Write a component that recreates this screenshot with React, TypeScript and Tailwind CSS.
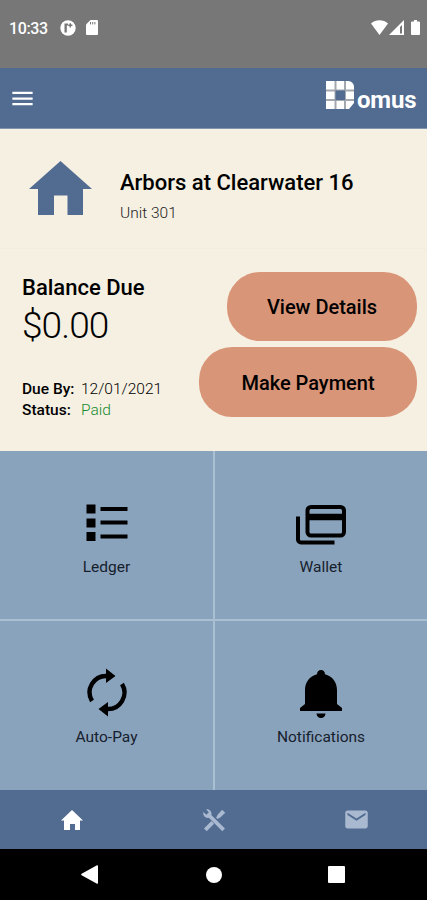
import type { ReactNode } from "react";
import { MdMail, MdMenu } from "react-icons/md";

function StatusBar() {
    return (
        <div className="flex h-[68px] items-start justify-between bg-[#777777] pt-[18px] pr-[7px] pl-[9px] text-white">
            <div className="flex h-[19px] items-center">
                <span className="mt-[2px] w-[39px] text-[16px] font-medium tracking-[-0.4px] whitespace-nowrap">10:33</span>
                <svg className="ml-3 h-4 w-4" viewBox="0 0 16 16">
                    <circle cx="8" cy="8" r="7.7" fill="currentColor" />
                    <path d="M4.500 3.500h3.500V5.500H6.800V12.500H4.500z" fill="#777777" />
                    <path d="M10.300 3.200v4.200M8.200 5.300h4.200" stroke="#777777" strokeWidth="1.5" />
                </svg>
                <svg className="ml-[10px] h-[15px] w-3" viewBox="0 0 12 15">
                    <path d="M4.500 0H11a1 1 0 0 1 1 1v13a1 1 0 0 1-1 1H1a1 1 0 0 1-1-1V4.500z" fill="currentColor" />
                    <path d="M4.500 2v2.400M6.700 2v2.400M8.900 2v2.400" stroke="#777777" strokeWidth="1" />
                </svg>
            </div>
            <div className="flex h-[19px] items-center">
                <svg className="h-[15px] w-[17px]" viewBox="0 0 17 15">
                    <path d="M0 3.400C4.800-.900 12.200-.900 17 3.400L8.500 15z" fill="currentColor" />
                </svg>
                <svg className="ml-[1px] h-[15px] w-[15px]" viewBox="0 0 15 15">
                    <path d="M0 15 15 0v15z" fill="currentColor" />
                    <path d="M11 7v6.500h2V5z" fill="#777777" />
                </svg>
                <svg className="ml-[7px] h-[15px] w-[9px]" viewBox="0 0 9 15">
                    <path d="M3 0h3v1.500h2a1 1 0 0 1 1 1V14a1 1 0 0 1-1 1H1a1 1 0 0 1-1-1V2.500a1 1 0 0 1 1-1h2z" fill="currentColor" />
                </svg>
            </div>
        </div>
    );
}

function Logo() {
    return (
        <div className="flex items-start text-white">
            <svg className="h-7 w-7" viewBox="0 0 28 28" fill="currentColor">
                <clipPath id="logo-shape">
                    <path d="M0 0h22a6 6 0 0 1 6 6v15l-6 7H0z" />
                </clipPath>
                <path d="M0 0h28v28H0z" fill="#a3a7ae" clipPath="url(#logo-shape)" />
                <path d="M0 0h8.500v8.500H0zM10.500 0h7.500v8.500h-7.500zM20 0h2a6 6 0 0 1 6 6v2.500h-8zM0 10.500h8.500v7.500H0zM20 10.500h8v7.500h-8zM0 20h8.500v8H0zM10.500 20h7.500v8h-7.500zM20 20h8v2l-5 6h-3z" />
                <path d="M9.500 9.500H19V19H9.500z" fill="#516b91" />
            </svg>
            <span className="mt-[5px] ml-[3px] w-[60px] text-[24px] leading-[28px] font-bold tracking-[-0.2px]">omus</span>
        </div>
    );
}

function Header() {
    return (
        <header className="flex h-[61px] items-start justify-between border-b border-[#8195af] bg-[#516b91] pt-[13px] pr-[10px] pl-[9px]">
            <MdMenu className="mt-1 h-[27px] w-[27px] text-white" />
            <Logo />
        </header>
    );
}

function Property() {
    return (
        <section className="flex h-[120px] items-start border-b border-[#f3ecdf] pt-8 pl-[29px]">
            <svg className="h-[54px] w-[63px] text-[#516b91]" viewBox="0 0 63 54" fill="currentColor">
                <path d="M31.500 0 63 28h-9v26H38.500V34.500H25V54H9V28H0z" />
            </svg>
            <div className="mt-[9px] ml-[28px]">
                <h1 className="text-[22px] leading-[26px] font-medium whitespace-nowrap text-black">
                    Arbors at Clearwater 16
                </h1>
                <p className="mt-[7px] text-[15.5px] leading-5 font-light text-[#222222]">Unit 301</p>
            </div>
        </section>
    );
}

function Balance() {
    return (
        <section className="flex h-[202px] justify-between pr-[10px] pl-[22px]">
            <div className="pt-[26px] whitespace-nowrap text-black">
                <h2 className="text-[22px] leading-[26px] font-medium">Balance Due</h2>
                <p className="mt-[4px] text-[37px] leading-[42px] font-light tracking-[-0.9px]">$0.00</p>
                <div className="mt-[32px] text-[15.5px] leading-[21px]">
                    <p className="flex">
                        <span className="w-[59px] font-medium">Due By:</span>
                        <span className="font-light">12/01/2021</span>
                    </p>
                    <p className="flex">
                        <span className="w-[59px] font-medium">Status:</span>
                        <span className="font-light text-[#178a2e]">Paid</span>
                    </p>
                </div>
            </div>
            <div className="flex flex-col items-end gap-[6px] pt-[23px]">
                <button className="h-[69px] w-[190px] rounded-[33px] bg-[#d99578] pt-[1px] text-[20px] font-medium text-black">
                    View Details
                </button>
                <button className="h-[70px] w-[218px] rounded-[33px] bg-[#d99578] pt-[2px] text-[20px] font-medium text-black">
                    Make Payment
                </button>
            </div>
        </section>
    );
}

function LedgerIcon() {
    return (
        <svg className="h-[54px] w-[54px]" viewBox="0 0 54 54">
            <path d="M6.500 8.500h9v9h-9zM6.500 22.500h9v9h-9zM6.500 36h9v9h-9z" fill="currentColor" />
            <path d="M20.500 13h27M20.500 26.500h27M20.500 40.500h27" stroke="currentColor" strokeWidth="4" />
        </svg>
    );
}

function WalletIcon() {
    return (
        <svg className="h-[54px] w-[54px]" viewBox="0 0 54 54" fill="none" stroke="currentColor" strokeWidth="4">
            <rect x="13.500" y="11" width="36.500" height="28.500" rx="3.500" />
            <path d="M13 21h37" strokeWidth="6.500" />
            <path d="M4 20.500V43.500a3 3 0 0 0 3 3H40.500" />
        </svg>
    );
}

function AutoPayIcon() {
    return (
        <svg className="h-[54px] w-[54px]" viewBox="0 0 54 54">
            <path d="M12 35A16.500 16.500 0 0 1 27 10M42 18A16.500 16.500 0 0 1 27 43" fill="none" stroke="currentColor" strokeWidth="4.400" />
            <path d="M26 2.500 35.500 10 26 17zM28 50.500 18.500 43 28 36z" fill="currentColor" />
        </svg>
    );
}

function BellIcon() {
    return (
        <svg className="h-[54px] w-[54px]" viewBox="0 0 54 54" fill="currentColor">
            <path d="M27 4a4 4 0 0 1 4 4.300C38.500 10.300 43 16.500 43 24v14l5 4v3H6v-3l5-4V24c0-7.500 4.500-13.700 12-15.700A4 4 0 0 1 27 4zM22.500 47.500h9a4.500 4.500 0 0 1-9 0z" />
        </svg>
    );
}

function Tile({ icon, label }: { icon: ReactNode; label: string }) {
    return (
        <button className="flex flex-col items-center bg-[#8aa3bd] pt-[45px] text-black">
            {icon}
            <span className="mt-[7px] text-[15.5px] leading-5 text-[#16202c]">{label}</span>
        </button>
    );
}

function BottomNav() {
    return (
        <nav className="grid h-[59px] grid-cols-3 place-items-center bg-[#516b91] pl-px text-[#a9b9d0]">
            <svg className="mt-px h-5 w-[22px] text-white" viewBox="0 0 22 20" fill="currentColor">
                <path d="M11 0 22 10.500h-3V20h-5v-6H9v6H3v-9.500H0z" />
            </svg>
            <svg className="mt-px h-[23px] w-[23px]" viewBox="0 0 24 24" fill="currentColor">
                <path d="m8.700 6.300 14.200 14.100-2.700 2.700L6.100 9.100A4.600 4.600 0 0 1 .500 3.200l2.900 2.900 2.700-2.700L3.200.500a4.600 4.600 0 0 1 5.500 5.800z" />
                <path d="M1 20.300 8.800 12.500l2.800 2.800L3.800 23.100z" />
                <path d="m13.700 9.200 1.700-3.500L20 .800 23.200 4l-4.800 4.700-3.200 1.800z" />
            </svg>
            <MdMail className="h-[27px] w-[27px]" />
        </nav>
    );
}

function SystemBar() {
    return (
        <div className="flex h-[51px] items-center bg-black pl-[81px] text-white">
            <svg className="h-[19px] w-[17px]" viewBox="0 0 17 19" fill="currentColor">
                <path d="M16 .300a.800.800 0 0 1 1 .800v16.800a.800.800 0 0 1-1 .800L.600 10.200a.800.800 0 0 1 0-1.400z" />
            </svg>
            <span className="ml-[108px] h-4 w-4 rounded-full bg-white" />
            <span className="ml-[106px] h-[17px] w-[17px] rounded-[1px] bg-white" />
        </div>
    );
}

export default function App() {
    return (
        <div className="flex h-[900px] w-[427px] flex-col overflow-hidden bg-[#f6f0e2] font-['Roboto',sans-serif]">
            <StatusBar />
            <Header />
            <Property />
            <Balance />
            <main className="grid h-[339px] grid-cols-[213px_1fr] grid-rows-[168px_1fr] gap-[2px] bg-[#abbfd2]">
                <Tile icon={<LedgerIcon />} label="Ledger" />
                <Tile icon={<WalletIcon />} label="Wallet" />
                <Tile icon={<AutoPayIcon />} label="Auto-Pay" />
                <Tile icon={<BellIcon />} label="Notifications" />
            </main>
            <BottomNav />
            <SystemBar />
        </div>
    );
}
